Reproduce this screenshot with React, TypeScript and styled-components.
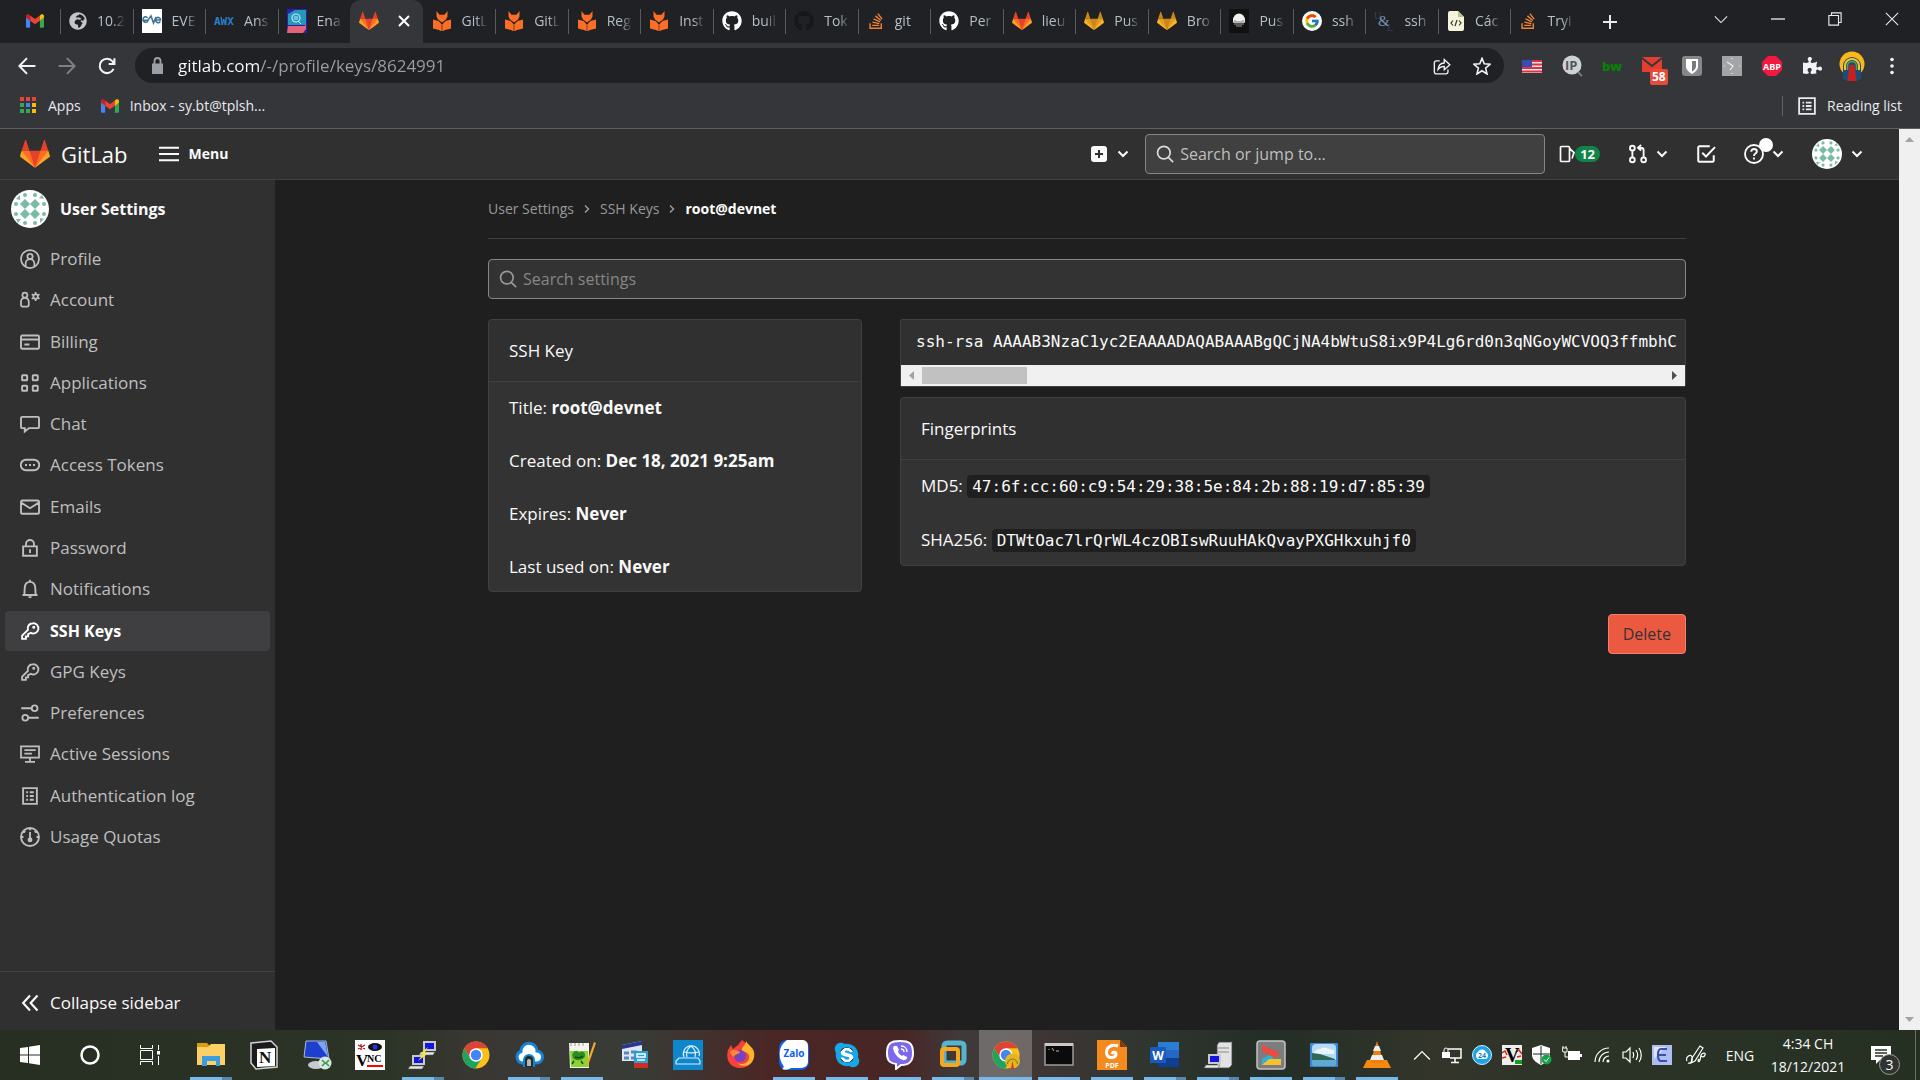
import React from "react";
import styled, { createGlobalStyle, css } from "styled-components";
import { FaGithub, FaStackOverflow, FaGlobeAfrica, FaSkype, FaPuzzlePiece } from "react-icons/fa";
import { FcGoogle } from "react-icons/fc";

/* ---------- base ---------- */

const GlobalStyle = createGlobalStyle`
  *, *::before, *::after { box-sizing: border-box; }
  body { margin: 0; background: #1f1f1f; }
  body, button, input { font-family: "Open Sans", "Noto Sans", sans-serif; }
  button { border: 0; padding: 0; background: none; color: inherit; cursor: pointer; }
  a { color: inherit; text-decoration: none; }
  svg { display: block; flex: none; }
  h1, h2, p, ul, ol, dl, dd, pre { margin: 0; padding: 0; }
  ul, ol { list-style: none; }
`;

const Screen = styled.div`
  display: flex;
  flex-direction: column;
  min-height: 100vh;
  color: #fafafa;
`;

/* ---------- browser frame ---------- */

const BrowserFrame = styled.header`
  background: #35363a;
  border-bottom: 1px solid #5f6063;
  color: #e8eaed;
`;

const TabStrip = styled.div`
  display: flex;
  height: 43px;
  background: #202124;
`;

const PinnedTab = styled.button`
  display: flex;
  align-items: center;
  justify-content: center;
  width: 60px;
  padding: 0 0 2px 10px;
`;

const Tabs = styled.div`
  display: grid;
  grid-template-columns: repeat(21, minmax(0, 1fr));
  flex: 0 1 1523px;
`;

const TabButton = styled.button<{ $active?: boolean; $line?: boolean }>`
  position: relative;
  display: flex;
  align-items: center;
  gap: 10px;
  padding: 0 6px 2px 9px;
  font-size: 14px;
  line-height: 20px;
  color: #b6bfc7;
  text-align: left;

  ${(p) =>
    p.$line &&
    css`
      &::before {
        content: "";
        position: absolute;
        left: 0;
        top: 9px;
        width: 1px;
        height: 25px;
        background: #5a5c60;
      }
    `}

  ${(p) =>
    p.$active &&
    css`
      background: #35363a;
      border-radius: 10px 10px 0 0;
      justify-content: space-between;
      padding: 0 13px 2px 9px;
      color: #fff;
    `}
`;

const TabLabel = styled.span`
  flex: 1;
  min-width: 0;
  overflow: hidden;
  white-space: nowrap;
  mask-image: linear-gradient(90deg, #000 50%, transparent 95%);
`;

const WindowControls = styled.div`
  display: flex;
  margin-left: auto;
  height: 38px;
`;

const WindowButton = styled.button`
  display: flex;
  align-items: center;
  justify-content: center;
  width: 57px;
`;

const NewTab = styled.button`
  display: flex;
  align-items: center;
  justify-content: center;
  width: 54px;
  height: 43px;
`;

const Toolbar = styled.div`
  display: flex;
  align-items: center;
  height: 45px;
  padding: 0 8px 0 7px;
`;

const ToolButton = styled.button<{ $dim?: boolean }>`
  display: flex;
  align-items: center;
  justify-content: center;
  width: 40px;
  height: 36px;
  color: ${(p) => (p.$dim ? "#7d7f83" : "#f1f3f4")};
`;

const Omnibox = styled.label`
  display: flex;
  align-items: center;
  flex: 1;
  height: 35px;
  margin: 0 8px;
  padding: 0 2px 0 16px;
  border-radius: 18px;
  background: #202124;
  color: #9aa0a6;
`;

const AddressInput = styled.input`
  flex: 1;
  min-width: 0;
  margin-left: 14px;
  padding: 0;
  border: 0;
  outline: 0;
  font-size: 17px;
  line-height: 24px;
  background: linear-gradient(90deg, #fff 83px, #9aa0a6 83px);
  background-clip: text;
  -webkit-text-fill-color: transparent;
`;

const BookmarkBar = styled.nav`
  display: flex;
  align-items: center;
  height: 40px;
  padding: 0 18px 5px 20px;
  gap: 20px;
  font-size: 14px;
  line-height: 20px;
`;

const Bookmark = styled.a<{ $end?: boolean }>`
  display: flex;
  align-items: center;
  gap: 11px;
  ${(p) =>
    p.$end &&
    css`
      margin-left: auto;
      padding-left: 15px;
      border-left: 1px solid #5f6063;
    `}
`;

const MailBadge = styled.span`
  position: absolute;
  left: 18px;
  top: 23px;
  padding: 0 2px;
  border-radius: 2px;
  background: #e84a3a;
  color: #fff;
  font-size: 12px;
  font-weight: 700;
  line-height: 16px;
`;

const BadgeAnchor = styled.span`
  position: relative;
  display: flex;
  align-items: center;
  justify-content: center;
  width: 40px;
  height: 40px;
`;

/* ---------- GitLab page ---------- */

const Viewport = styled.div`
  display: flex;
  flex: 1;
`;

const Page = styled.div`
  display: flex;
  flex-direction: column;
  flex: 1;
  min-width: 0;
  background: #1f1f1f;
`;

const ScrollColumn = styled.div`
  display: flex;
  flex-direction: column;
  align-items: center;
  justify-content: space-between;
  width: 21px;
  padding: 8px 0;
  background: #f0f0f0;
`;

const NavBar = styled.nav`
  display: flex;
  align-items: center;
  height: 51px;
  padding: 0 36px 0 20px;
  background: #303030;
  border-bottom: 1px solid #404040;
`;

const Brand = styled.a`
  display: flex;
  align-items: center;
  gap: 11px;
  font-size: 22px;
  line-height: 28px;
`;

const MenuButton = styled.button`
  display: flex;
  align-items: center;
  gap: 10px;
  margin-left: 31px;
  font-size: 14px;
  font-weight: 700;
  line-height: 24px;
`;

const NavActions = styled.div`
  display: flex;
  align-items: center;
  flex: 1;
  justify-content: flex-end;
`;

const IconButton = styled.button<{ $gap?: number }>`
  position: relative;
  display: flex;
  align-items: center;
  gap: ${(p) => p.$gap ?? 8}px;
`;

const ActionCluster = styled.div`
  display: flex;
  align-items: center;
  gap: 28px;
  margin-left: 14px;
`;

const SearchField = styled.label<{ $header?: boolean }>`
  display: flex;
  align-items: center;
  gap: 6px;
  height: 40px;
  padding: 0 10px;
  border: 1px solid #868686;
  border-radius: 4px;
  background: ${(p) => (p.$header ? "#404040" : "#333")};
  color: ${(p) => (p.$header ? "#dbdbdb" : "#999")};
  ${(p) =>
    p.$header &&
    css`
      flex: 0 1 400px;
      margin-left: 16px;
    `}
`;

const SearchInput = styled.input`
  flex: 1;
  min-width: 0;
  padding: 0;
  border: 0;
  outline: 0;
  background: none;
  color: #fafafa;
  font-size: 16px;
  line-height: 25px;

  &::placeholder {
    opacity: 1;
  }
  &[data-tone="light"]::placeholder { color: #bfbfbf; }
  &[data-tone="dim"]::placeholder { color: #868686; }
`;

const CountBadge = styled.span`
  padding: 0 5px;
  border-radius: 8px;
  background: #108548;
  color: #fff;
  font-size: 13px;
  font-weight: 700;
  line-height: 16px;
`;

const Dot = styled.span`
  position: absolute;
  left: 15px;
  top: -6px;
  width: 14px;
  height: 14px;
  border-radius: 50%;
  background: #fff;
`;

const Body = styled.div`
  display: flex;
  flex: 1;
`;

const Sidebar = styled.aside`
  display: flex;
  flex-direction: column;
  width: 275px;
  background: #303030;
  font-size: 17px;
  line-height: 24px;
`;

const SidebarTitle = styled.a`
  display: flex;
  align-items: center;
  gap: 11px;
  padding: 10px 11px;
  font-size: 16px;
  font-weight: 700;
`;

const SidebarList = styled.ul`
  display: flex;
  flex-direction: column;
  justify-content: space-between;
  min-height: 618px;
  margin: 1px 5px 0;
`;

const SidebarLink = styled.a<{ $active?: boolean }>`
  display: flex;
  align-items: center;
  gap: 10px;
  height: 40px;
  padding: 0 15px;
  border-radius: 4px;
  color: ${(p) => (p.$active ? "#fff" : "#bfbfbf")};
  background: ${(p) => (p.$active ? "#3f3f41" : "transparent")};
  font-weight: ${(p) => (p.$active ? 700 : 400)};
  font-size: ${(p) => (p.$active ? 16 : 17)}px;
`;

const CollapseButton = styled.button`
  display: flex;
  align-items: center;
  gap: 10px;
  height: 59px;
  margin-top: auto;
  padding: 4px 20px 0;
  border-top: 1px solid #404040;
  font-size: 17px;
  line-height: 24px;
`;

const Main = styled.main`
  flex: 1;
  min-width: 0;
  padding: 0 40px;
  font-size: 17px;
  line-height: 25px;
`;

const Content = styled.div`
  max-width: 1198px;
  margin: 0 auto;
`;

const Breadcrumbs = styled.ol`
  display: flex;
  align-items: center;
  gap: 8px;
  height: 59px;
  margin-bottom: 20px;
  border-bottom: 1px solid #404040;
  font-size: 14px;
  line-height: 20px;
  color: #999;
`;

const Crumb = styled.li<{ $current?: boolean }>`
  display: flex;
  align-items: center;
  gap: 8px;
  ${(p) => p.$current && "color: #fff; font-weight: 700;"}
`;

const Columns = styled.div`
  display: grid;
  grid-template-columns: minmax(0, 374fr) minmax(0, 786fr);
  column-gap: 38px;
  align-items: start;
  margin-top: 20px;
`;

const Card = styled.section`
  border: 1px solid #404040;
  border-radius: 4px;
  background: #333;
`;

const CardTitle = styled.h2`
  padding: 18px 20px;
  border-bottom: 1px solid #404040;
  border-radius: 4px 4px 0 0;
  background: #303030;
  font-size: 17px;
  font-weight: 400;
  line-height: 25px;
`;

const CardList = styled.ul`
  display: grid;
  gap: 28px;
  padding: 13px 20px 12px;
  font-size: 17px;
  line-height: 25px;
`;

const Code = styled.code`
  padding: 2px 5px;
  border-radius: 4px;
  background: #1f1f1f;
  font-family: "DejaVu Sans Mono", monospace;
  font-size: 16px;
`;

const KeyBox = styled.div`
  margin-bottom: 10px;
  border: 1px solid #404040;
  border-radius: 2px;
  background: #303030;
`;

const KeyText = styled.pre`
  overflow: hidden;
  padding: 9px 0 11px 15px;
  font-family: "DejaVu Sans Mono", monospace;
  font-size: 16px;
  line-height: 25px;
`;

const ScrollRow = styled.div`
  display: flex;
  align-items: center;
  justify-content: space-between;
  height: 21px;
  padding: 0 8px;
  background: #f0f0f0;
`;

const ScrollThumb = styled.span`
  width: 105px;
  height: 17px;
  margin: 0 auto 0 8px;
  background: #c1c1c1;
`;

const Arrow = styled.span<{ $dir: "up" | "down" | "left" | "right"; $dark?: boolean }>`
  width: ${(p) => (p.$dir === "up" || p.$dir === "down" ? 9 : 5)}px;
  height: ${(p) => (p.$dir === "up" || p.$dir === "down" ? 5 : 9)}px;
  background: ${(p) => (p.$dark ? "#505050" : "#a3a3a3")};
  clip-path: ${(p) =>
    ({
      up: "polygon(50% 0, 100% 100%, 0 100%)",
      down: "polygon(0 0, 100% 0, 50% 100%)",
      left: "polygon(100% 0, 100% 100%, 0 50%)",
      right: "polygon(0 0, 100% 50%, 0 100%)",
    })[p.$dir]};
`;

const Actions = styled.div`
  display: flex;
  justify-content: flex-end;
  margin-top: 48px;
`;

const DeleteButton = styled.button`
  height: 40px;
  padding: 0 14px;
  border: 1px solid #f57f6c;
  border-radius: 4px;
  background: #ec5941;
  color: #333;
  font-size: 16px;
  line-height: 24px;
`;

/* ---------- Windows taskbar ---------- */

const Taskbar = styled.footer`
  display: flex;
  height: 50px;
  background: linear-gradient(
    90deg,
    #262f22 0%,
    #2b3426 20%,
    #3a3733 25%,
    #383c37 33%,
    #4a2725 40%,
    #482625 47%,
    #3f3a39 50%,
    #3d3533 55%,
    #313630 59%,
    #232e26 66%,
    #33352a 75%,
    #2a3326 85%,
    #253023 100%
  );
`;

const SystemButton = styled.button`
  display: flex;
  align-items: center;
  justify-content: center;
  width: 60px;
`;

const AppGroup = styled.div`
  display: flex;
  margin-left: 4px;
`;

type Running = "none" | "one" | "many" | "active";

const AppButton = styled.button<{ $run: Running }>`
  display: flex;
  align-items: center;
  justify-content: center;
  width: 53px;
  background-color: ${(p) => (p.$run === "active" ? "rgba(255,255,255,0.25)" : "transparent")};
  background-repeat: no-repeat;
  background-position: center bottom;
  background-size: ${(p) => (p.$run === "active" ? 53 : 42)}px 3px;
  background-image: ${(p) =>
    ({
      none: "none",
      one: "linear-gradient(#76b9ed, #76b9ed)",
      active: "linear-gradient(#76b9ed, #76b9ed)",
      many: "linear-gradient(90deg, #76b9ed 32px, #5787ad 32px)",
    })[p.$run]};
`;

const Tray = styled.div`
  display: flex;
  align-items: stretch;
  margin-left: auto;
`;

const TrayButton = styled.button`
  display: flex;
  align-items: center;
  justify-content: center;
  width: 30px;
`;

const PenButton = styled(TrayButton)`
  width: 38px;
`;

const Language = styled.button`
  width: 50px;
  font-size: 14px;
`;

const Clock = styled.button`
  width: 86px;
  font-size: 14px;
  line-height: 23px;
  text-align: center;
`;

const Notifications = styled.button`
  position: relative;
  display: flex;
  align-items: center;
  justify-content: center;
  width: 65px;
  margin-right: 4px;
  padding-right: 5px;
  border-right: 1px solid #6b7068;
`;

const NoticeCount = styled.span`
  position: absolute;
  left: 28px;
  top: 24px;
  width: 21px;
  height: 21px;
  border: 1px solid #9a9d98;
  border-radius: 50%;
  background: #2f3430;
  font-size: 14px;
  line-height: 19px;
`;

/* ---------- drawings ---------- */

const Tanuki = ({ size = 20, gold = false }: { size?: number; gold?: boolean }) => {
  const [a, b, c] = gold ? ["#c9861a", "#e39d1f", "#fcb424"] : ["#e24329", "#fc6d26", "#fca326"];
  return (
    <svg width={size} height={size} viewBox="0 0 36 36" aria-hidden="true">
      <path fill={a} d="M2 14l9.38 9v-9l-4-12.28c-.205-.632-1.176-.632-1.38 0zM34 14l-9.38 9v-9l4-12.28c.205-.632 1.176-.632 1.38 0zM18 34.38L3 14h30z" />
      <path fill={b} d="M18 34.38L11.38 14H2l4 11zM18 34.38L24.62 14H34l-4 11z" />
      <path fill={c} d="M2 14L.1 20.16c-.18.565 0 1.2.5 1.56l17.42 12.66zM34 14l1.9 6.16c.18.565 0 1.2-.5 1.56L18 34.38z" />
    </svg>
  );
};

const Gmail = ({ size = 18 }: { size?: number }) => (
  <svg width={size} height={size} viewBox="0 0 24 24" aria-hidden="true">
    <path fill="#4285f4" d="M0 6v13.5C0 20.4.7 21 1.6 21H5.5V10z" />
    <path fill="#34a853" d="M24 6v13.5c0 .9-.7 1.5-1.6 1.5H18.500V10z" />
    <path fill="#ea4335" d="M5.500 4.500L12 9.400l6.500-4.900V11.500L12 16.400 5.500 11.500z" />
    <path fill="#c5221f" d="M0 5.500C0 3 2.700 2.400 4.200 3.500l1.300 1v7L0 7.400z" />
    <path fill="#fbbc04" d="M24 5.500c0-2.500-2.700-3.100-4.200-2l-1.300 1v7L24 7.400z" />
  </svg>
);

const BookFox = () => (
  <svg width="20" height="22" viewBox="0 0 20 22" aria-hidden="true">
    <path fill="#fc6d26" d="M1 9.500l5.500 1.500 2.500 2.500V21l-2-1-6-1.500zM19 9.500L13.500 11 11 13.500V21l2-1 6-1.500zM9.300 14h1.400v7H9.300zM4.500 1l3 3.800h5l3-3.800v5.500L14 9.500 10 12.500 6 9.500 4.500 6.500z" />
  </svg>
);

const EveIcon = () => (
  <svg width="20" height="24" viewBox="0 0 20 24" aria-hidden="true">
    <path fill="#fff" d="M0 0h20v24H0z" />
    <path d="M5.500 9c-1-2-4.500-1.500-4.500 1.500S5 14 6 12M1.500 11.300H6L9 7l2.500 7L14 8M14 11h4.500c0-3-4-3.500-4.700-1-.8 4 3.200 4.500 4.500 2.500" fill="none" stroke="#3f7394" strokeWidth="1.600" />
  </svg>
);

const AwxIcon = () => (
  <svg width="20" height="20" viewBox="0 0 20 20" aria-hidden="true">
    <text x="0" y="14" fontSize="11" fontWeight="700" fill="#2a7fc9" fontFamily="DejaVu Sans Mono">AWX</text>
  </svg>
);

const CubeIcon = () => (
  <svg width="20" height="24" viewBox="0 0 20 24" aria-hidden="true">
    <path fill="#2b1fb0" d="M0 0h20v24H0z" />
    <path fill="#2497bd" d="M1 5l7-4h11v15H1z" />
    <path fill="#e3637a" d="M1 17h17l1-2v5l-3 4H0z" />
    <circle cx="9" cy="9" r="4" fill="none" stroke="#bfe7f5" strokeWidth="1.200" />
    <path d="M8 7v4M10 7v4M11 12l3 3" stroke="#bfe7f5" />
  </svg>
);

const OctopusIcon = () => (
  <svg width="20" height="24" viewBox="0 0 20 24" aria-hidden="true">
    <path fill="#111" d="M0 0h20v24H0z" />
    <path fill="#f0f0f0" d="M4 11a6 6.500 0 0112 0c0 2 0 3-1 3H5c-1 0-1-1-1-3z" />
    <path d="M6 11v5M8 12v6M10 12v6M12 12v6M14 11v5" stroke="#888" strokeWidth="1.200" />
  </svg>
);

const UnixIcon = () => (
  <svg width="20" height="22" viewBox="0 0 20 22" aria-hidden="true">
    <g fontFamily="Liberation Serif" fill="#31415f">
      <text x="0" y="9" fontSize="10">U</text>
      <text x="4" y="16" fontSize="15" fill="#7d93bd">&amp;</text>
      <text x="13" y="21" fontSize="10">L</text>
    </g>
  </svg>
);

const CodeDocIcon = () => (
  <svg width="18" height="22" viewBox="0 0 18 22" aria-hidden="true">
    <path fill="#f6f5dc" d="M3 1h8l6 6v12a2 2 0 01-2 2H3a2 2 0 01-2-2V3a2 2 0 012-2z" />
    <path fill="#b9c39b" d="M11 1l6 6h-6z" />
    <path d="M6 10.500L4 13l2 2.500M12 10.500l2 2.500-2 2.500M10 10l-2 6" fill="none" stroke="#333" strokeWidth="1.200" />
  </svg>
);

const GlobeIcon = () => <FaGlobeAfrica size={18} color="#c4c7c9" />;

type StrokeProps = { d: string; size?: number; w?: number; vb?: number; children?: React.ReactNode };
const Stroke = ({ d, size = 20, w = 1.5, vb = 16, children }: StrokeProps) => (
  <svg width={size} height={size} viewBox={`0 0 ${vb} ${vb}`} fill="none" stroke="currentColor" strokeWidth={w} aria-hidden="true">
    <path d={d} />
    {children}
  </svg>
);

const Chevron = () => <Stroke size={12} vb={12} w={2} d="M1.500 3.500L6 8l4.500-4.500" />;
const Magnifier = ({ size = 18 }: { size?: number }) => <Stroke size={size} d="M7 1.200a5.600 5.600 0 100 11.200A5.600 5.600 0 007 1.200zM11 11l4.200 4.200" />;

const IdenticonArt = ({ size }: { size: number }) => {
  const teal = "#79bba4";
  const small = [5, 14, 24, 33];
  return (
    <svg width={size} height={size} viewBox="0 0 38 38" aria-hidden="true">
      <circle cx="19" cy="19" r="19" fill="#fff" />
      {[14, 24].map((x) => [14, 24].map((y) => <path key={`${x}-${y}`} fill={teal} d={`M${x} ${y - 5}l5 5-5 5-5-5z`} />))}
      {small.map((x) => small.map((y) =>
        (x === 5 || x === 33) !== (y === 5 || y === 33) ? <circle key={`${x}.${y}`} cx={x} cy={y} r="2" fill={teal} /> : null
      ))}
      <path fill={teal} d="M5 9l4-4v5zM33 9l-5-1 3-3zM5 29l5 0-3 4zM33 29l-4 4v-5z" />
    </svg>
  );
};

const sideIcons: Record<string, React.ReactNode> = {
  Profile: <Stroke d="M8 .8a7.200 7.200 0 100 14.400A7.200 7.200 0 008 .8zM8 3.800a2.100 2.100 0 100 4.200 2.100 2.100 0 000-4.200zM4.500 14v-2.500a3.500 3.500 0 017 0V14" w={1.4} />,
  Account: <Stroke d="M3.900 2.100a2 2 0 100 4 2 2 0 000-4zM.8 12V9.300a3.100 3.100 0 016.200 0V12a1.200 1.200 0 01-1.200 1.200H2A1.200 1.200 0 01.8 12z" w={1.4}><circle cx="12.500" cy="5.200" r="1.800" /><path d="M12.500 1.600v1.600M12.500 7.200v1.600M9.400 3.400l1.400.8M14.200 6.200l1.400.8M9.400 7l1.400-.8M14.200 4.200l1.400-.8" /></Stroke>,
  Billing: <Stroke d="M1.800 2.800h12.400a1 1 0 011 1v8.600a1 1 0 01-1 1H1.800a1 1 0 01-1-1V3.800a1 1 0 011-1zM.8 6h14.400M3.500 10h4" />,
  Applications: <Stroke d="M2.200 1.800h3a.5.5 0 01.5.5v3a.5.5 0 01-.5.5h-3a.5.5 0 01-.5-.5v-3a.5.500 0 01.5-.5zM10.700 1.800h3a.5.5 0 01.5.5v3a.5.5 0 01-.5.5h-3a.5.5 0 01-.5-.5v-3a.5.5 0 01.5-.5zM2.200 10.200h3a.5.5 0 01.5.5v3a.5.5 0 01-.5.5h-3a.5.5 0 01-.5-.5v-3a.5.5 0 01.5-.5zM10.700 10.200h3a.5.5 0 01.5.5v3a.5.5 0 01-.5.5h-3a.5.5 0 01-.5-.5v-3a.5.5 0 01.5-.5z" />,
  Chat: <Stroke d="M1.800 2.300h12.400a1 1 0 011 1v7a1 1 0 01-1 1H7.200L3.800 14v-2.700h-2a1 1 0 01-1-1v-7a1 1 0 011-1z" />,
  "Access Tokens": <Stroke d="M4.800 3.800h6.400a4 4 0 010 8.400H4.800a4 4 0 010-8.400zM4 8h1.600M7.200 8h1.600M10.400 8H12" />,
  Emails: <Stroke d="M1.800 2.800h12.400a1 1 0 011 1v8.600a1 1 0 01-1 1H1.800a1 1 0 01-1-1V3.800a1 1 0 011-1zM1 4.500l7 4.500 7-4.500" />,
  Password: <Stroke d="M2.500 6.700h11v7.500h-11zM4.800 6.500V4.800a3.200 3.200 0 016.400 0v1.700M8 9v3" />,
  Notifications: <Stroke d="M2 12.800h12M3.500 12.500l.3-5.500C4 4 5.500 2.300 8 2.300S12 4 12.200 7l.3 5.500M8 .5v1.800M6.800 14.500h2.400" />,
  key: <Stroke d="M10.200 1.800a4.100 4.100 0 00-3.900 5.300L1.700 11.700v2.600h3v-2h1.800v-1.800l2.200-1a4.100 4.100 0 101.500-7.700z"><circle cx="11" cy="5" r=".5" /></Stroke>,
  Preferences: <Stroke d="M1 4.200h8.200M6.800 11.800H15"><circle cx="11.700" cy="4.200" r="2.300" /><circle cx="4.200" cy="11.800" r="2.300" /></Stroke>,
  "Active Sessions": <Stroke d="M.8 1.800h14.400v9H.8zM8 11v3M4 14.300h8M3.500 4.800h9M3.500 7.600h6" w={1.4} />,
  "Authentication log": <Stroke d="M2.500 1.700h11v12.600h-11zM5 5h1.400M5 8h1.400M5 11h1.400M7.800 5H11M7.800 8H11M7.800 11H11" />,
  "Usage Quotas": <Stroke d="M8 .8a7.200 7.200 0 100 14.400A7.200 7.200 0 008 .8zM8 4v6M8 1v1.500M1 8h1.800M13.200 8H15M3.200 3.200l1 1M12.800 3.200l-1 1"><circle cx="8" cy="10.300" r="1.200" fill="currentColor" /></Stroke>,
};

const ChromeLogo = ({ size = 28, profile = false }: { size?: number; profile?: boolean }) => (
  <svg width={size} height={size} viewBox="0 0 28 28" aria-hidden="true">
    <circle cx="14" cy="14" r="13.500" fill="#fbc116" />
    <path fill="#db4437" d="M2.300 7.300A13.500 13.500 0 0125.700 7.300H14L8.200 17.300z" />
    <path fill="#1ea362" d="M2.300 7.300A13.500 13.500 0 0013.200 27.500L19.800 17.300 14 20.500 8.200 17.300z" />
    <circle cx="14" cy="14" r="6.700" fill="#fff" />
    <circle cx="14" cy="14" r="5.200" fill="#4285f4" />
    {profile && (
      <g>
        <circle cx="20.500" cy="20" r="7.500" fill="#e8b420" />
        <path fill="none" stroke="#647c21" d="M15.500 23a5 5 0 0110 0" />
        <path fill="#d9332b" d="M19 28l1.500-8 1.500 8z" />
      </g>
    )}
  </svg>
);

const ProfileArt = () => (
  <svg width="26" height="30" viewBox="0 0 26 30" aria-hidden="true">
    <circle cx="13" cy="13" r="12.500" fill="#fbb81b" />
    <path fill="#1a4c7c" d="M4 28V15a9 9 0 0118 0v13l-5 2H9z" />
    <path d="M6 19v-4a7 7 0 0114 0v4" fill="none" stroke="#f4c531" strokeWidth="2" />
    <path d="M8.500 19v-4a4.500 4.500 0 019 0v4" fill="none" stroke="#57a639" strokeWidth="1.500" />
    <path fill="#c9201f" d="M10.500 14h5l2 16h-9z" />
  </svg>
);

/* small picture helper for the coloured application icons */
const Pic = ({ w = 30, h = 30, children }: { w?: number; h?: number; children: React.ReactNode }) => (
  <svg width={w} height={h} viewBox={`0 0 ${w} ${h}`} aria-hidden="true">{children}</svg>
);

const extensions: { name: string; art: React.ReactNode; badge?: string }[] = [
  { name: "Translate", art: <Pic w={20} h={16}><path fill="#f3e9ea" d="M0 2h20v13H0z" /><path d="M0 3h20M0 6.500h20M0 10h20M0 13.500h20" stroke="#df2f43" strokeWidth="2" /><path fill="#3c4bb0" d="M0 2h10v7H0z" /></Pic> },
  { name: "IP address", art: <Pic w={22} h={22}><circle cx="11" cy="10" r="9.500" fill="#cfd2d4" /><path d="M17 17l4 4" stroke="#777" strokeWidth="2" /><text x="4" y="15" fontSize="13" fontWeight="700" fontFamily="Open Sans" fill="#55585b">IP</text></Pic> },
  { name: "bw", art: <Pic w={22} h={20}><text x="1" y="15" fontSize="13" fontWeight="800" fontFamily="Open Sans" fill="#088008">bw</text></Pic> },
  { name: "Mail", badge: "58", art: <Pic w={22} h={22}><path fill="#e33e2f" d="M1 2h20v15H1z" /><path d="M1 3l10 8 10-8" fill="none" stroke="#35363a" strokeWidth="2" /></Pic> },
  { name: "Password vault", art: <Pic w={22} h={22}><rect x="1" y="1" width="20" height="20" rx="3" fill="#858789" /><path fill="#fff" d="M5 4h12v7c0 4-3 6-6 8-3-2-6-4-6-8z" /><path fill="#77797b" d="M11 6h4v5c0 3-2 4-4 5.500z" /></Pic> },
  { name: "Clock", art: <Pic w={20} h={22}><path fill="#a3a4a6" d="M0 1h20v20H0z" /><path d="M5 7l6 4-3 4M10 3v1M10 18v1M2 11h1M17 11h1" fill="none" stroke="#eee" strokeWidth="1.200" /></Pic> },
  { name: "Ad blocker", art: <Pic w={22} h={22}><path fill="#f2183f" d="M7 1h8l6 6v8l-6 6H7l-6-6V7z" /><text x="11" y="14.500" textAnchor="middle" fontSize="9" fontWeight="700" fontFamily="Open Sans" fill="#fff">ABP</text></Pic> },
  { name: "Extensions", art: <FaPuzzlePiece size={19} color="#f1f3f4" /> },
  { name: "Browser profile", art: <ProfileArt /> },
];

const tabs: { icon: React.ReactNode; text?: string }[] = [
  { icon: <GlobeIcon />, text: "10.2" },
  { icon: <EveIcon />, text: "EVE" },
  { icon: <AwxIcon />, text: "Ans" },
  { icon: <CubeIcon />, text: "Ena" },
  { icon: <Tanuki /> },
  { icon: <BookFox />, text: "GitL" },
  { icon: <BookFox />, text: "GitL" },
  { icon: <BookFox />, text: "Reg" },
  { icon: <BookFox />, text: "Inst" },
  { icon: <FaGithub size={20} color="#fff" />, text: "buil" },
  { icon: <FaGithub size={20} color="#15171a" />, text: "Tok" },
  { icon: <FaStackOverflow size={18} color="#ef8236" />, text: "git" },
  { icon: <FaGithub size={20} color="#fff" />, text: "Per" },
  { icon: <Tanuki />, text: "lieu" },
  { icon: <Tanuki gold />, text: "Pus" },
  { icon: <Tanuki gold />, text: "Bro" },
  { icon: <OctopusIcon />, text: "Pus" },
  { icon: <Pic w={20} h={22}><circle cx="10" cy="11" r="10" fill="#fff" /><g transform="translate(2 3)"><FcGoogle size={16} /></g></Pic>, text: "ssh" },
  { icon: <UnixIcon />, text: "ssh" },
  { icon: <CodeDocIcon />, text: "Các" },
  { icon: <FaStackOverflow size={18} color="#ef8236" />, text: "Tryi" },
];

const Monitor = ({ x, y }: { x: number; y: number }) => (
  <g transform={`translate(${x} ${y})`}>
    <path fill="#c9c9c9" d="M2 0h13v10H2z" />
    <path fill="#1414e0" d="M4 2h9v6H4z" />
    <path fill="#e8e8e8" stroke="#555" strokeWidth=".6" d="M0 11h14l-2 3H-2z" />
  </g>
);

const apps: { name: string; run: Running; art: React.ReactNode }[] = [
  { name: "File Explorer", run: "many", art: <Pic><path fill="#e09a12" d="M1 3h10l3 3h1v6H1z" /><path fill="#fcd064" d="M1 7h11l3-3h14v21H1z" /><path fill="#3d9be0" d="M6 16h18v10h-4v-5h-9v5H6z" /></Pic> },
  { name: "Notion", run: "none", art: <Pic><path fill="#1b1b1b" stroke="#d4d4d4" strokeWidth="1.500" d="M2 3l20-2 6 6v20l-21 2-5-6z" /><path fill="#fff" d="M8 9l18-1v18L8 27z" /><text x="10" y="23" fontSize="17" fontWeight="700" fontFamily="Liberation Serif" fill="#111">N</text></Pic> },
  { name: "Remote Desktop", run: "none", art: <Pic><path fill="#1d3fd0" stroke="#aebbd0" d="M4 1h20l3 18-25-2z" /><path fill="#7ca6f5" d="M15 2h8l3 15z" /><ellipse cx="14" cy="25" rx="8" ry="4" fill="#c5cbd3" /><circle cx="23" cy="23" r="6.500" fill="#dfe3e3" /><path d="M20 20l3 3-3 3M27 20l-3 3 3 3" fill="none" stroke="#27a34a" strokeWidth="1.500" /></Pic> },
  { name: "VNC", run: "none", art: <Pic><path fill="#fff" d="M0 0h30v30H0z" /><ellipse cx="20" cy="7" rx="7" ry="4" fill="#111" /><circle cx="20" cy="7" r="2.500" fill="#2236d8" /><path d="M3 5l7 4M3 9l7-4M6 4v6" stroke="#b01616" strokeWidth="1.300" /><text x="1" y="26" fontSize="17" fontWeight="700" fontFamily="Liberation Serif">V</text><text x="12" y="22" fontSize="10" fontWeight="700" fontFamily="Liberation Serif">NC</text><path fill="#f00" d="M12 25h16v2H12z" /></Pic> },
  { name: "PuTTY", run: "many", art: <Pic><Monitor x={13} y={1} /><Monitor x={2} y={15} /><path fill="#f7ef1b" d="M20 7l-7 6 2 1-5 7 8-6-2-1z" /></Pic> },
  { name: "Chrome", run: "none", art: <ChromeLogo /> },
  { name: "Cloud tunnel", run: "many", art: <Pic><path fill="#fff" stroke="#1583d8" strokeWidth="3" d="M8 23a6 6 0 01-1-11.500A8 8 0 0123 11a6 6 0 01-1 12z" /><path fill="#262d25" d="M10 27v-7a5 5 0 0110 0v7z" /><path fill="#1583d8" d="M9 27v-7a6 6 0 0112 0v7h-2v-7a4 4 0 00-8 0v7z" /><path fill="#b7b7b7" d="M13 26v-5a2 2 0 014 0v5z" /></Pic> },
  { name: "Notepad++", run: "one", art: <Pic><path fill="#f5f5ef" d="M2 3h20v25H3z" /><path fill="#8bd432" d="M3 11h18l1 16H4z" /><path fill="#2f8a24" d="M6 13c2-3 5-3 6 0 3-3 6-1 6 2 1 5-10 7-12 3-1-2-1-4 0-5z" /><path d="M8 17c3 1 6 1 8-1M7 21l-2 3M14 21l2 3" fill="none" stroke="#164d12" strokeWidth="1.500" /><path d="M4 3v3M8 3v3M12 3v3M16 3v3" stroke="#999" /><path fill="#f0a92a" d="M27 2l2 1-7 20-3 3 1-4z" /></Pic> },
  { name: "Network scanner", run: "none", art: <Pic><path fill="#dce7f3" d="M2 5l20-4v20H2z" /><path fill="#26378e" d="M2 5l20-4v4L2 9z" /><path d="M4 13h5M11 12h6M4 18h5M11 18h4" stroke="#5d84bd" strokeWidth="3" /><path fill="#2a9fd3" d="M14 11h14v12H14z" /><path d="M17 14h8v3h-8zM17 20h8" fill="none" stroke="#fff" strokeWidth="1.500" /><path fill="#d22b22" d="M14 23h14v5H14z" /></Pic> },
  { name: "Web disk", run: "none", art: <Pic><path fill="#0e86cc" d="M0 0h30v30H0z" /><path d="M6 18h19l2 3v3H3v-3zM11 17a8 8 0 1115-1M18 6c-4 3-5 7-4 11M18 6c4 3 5 7 4 11M11 12c4 1 10 1 15 0" fill="none" stroke="#d8efff" strokeWidth="1.200" /></Pic> },
  { name: "Firefox", run: "none", art: <Pic><path fill="#f4413b" d="M2 10l3-5 2 4 5-4 4-5 5 4 3 3c8 10 1 21-9 21S-1 21 2 10z" /><path fill="#ffb52b" d="M20 1c0 5-5 5-4 10 5 1 8 3 7 8-2 5-7 6-12 4 9 7 19 0 17-11-1-5-6-7-8-11z" /><circle cx="14" cy="16" r="6" fill="#7641c5" /><path fill="#ff8a2a" d="M4 11c4-2 7-1 10 1-1 3-5 1-6 5-2-1-4-4-4-6z" /></Pic> },
  { name: "Zalo", run: "one", art: <Pic><rect width="30" height="30" rx="8" fill="#0a61ef" /><path fill="#fff" d="M8 0h15c4 0 6 2 6 7v14c0 5-3 7-8 7h-9c-3 2-6 2-9 1 2-1 2-2 1-4-5-7-5-19 4-25z" /><text x="15" y="17" textAnchor="middle" fontSize="10" fontWeight="700" fontFamily="Open Sans" fill="#0a61ef">Zalo</text></Pic> },
  { name: "Skype", run: "one", art: <FaSkype size={28} color="#14a8e8" style={{ background: "radial-gradient(circle, #fff 35%, transparent 36%)" }} /> },
  { name: "Viber", run: "one", art: <Pic><path fill="#7c68ee" stroke="#fff" strokeWidth="2" d="M15 1c9 0 13 2 13 12 0 9-4 12-12 12l-5 4v-5C4 23 2 20 2 13 2 3 6 1 15 1z" /><path fill="#fff" d="M9 6c-3 2 2 12 9 14 2 1 5-2 4-3l-4-2-1 1c-2-1-4-3-4-5l1-1-2-4z" /><path d="M16 6c4 0 6 3 6 6M16 9c2 0 3 1 3 3" fill="none" stroke="#fff" strokeWidth="1.300" /></Pic> },
  { name: "VMware", run: "many", art: <Pic><rect x="6" y="3" width="20" height="20" rx="3" fill="none" stroke="#55b5cf" strokeWidth="5" /><rect x="4" y="9" width="16" height="16" rx="2" fill="none" stroke="#f6a81c" strokeWidth="4" /></Pic> },
  { name: "Chrome with profile", run: "active", art: <ChromeLogo profile /> },
  { name: "Command Prompt", run: "one", art: <Pic><path fill="#0b0b0b" stroke="#9c9c9c" strokeWidth="1.500" d="M1 4h28v21H1z" /><path fill="#c9c9c9" d="M1 3h28v3H1z" /><path d="M5 9v1M8 8l2 3M12 11h3" stroke="#bbb" /></Pic> },
  { name: "Foxit PDF", run: "one", art: <Pic><path fill="#f58a1f" d="M0 0h23l7 7v23H0z" /><path fill="#7b3f05" d="M23 0l7 7h-7z" /><path d="M21 6c-8-3-13 3-11 9 2 4 9 3 9-1 0-2-3-3-4 0" fill="none" stroke="#fff" strokeWidth="3" /><text x="15" y="28" textAnchor="middle" fontSize="7" fontWeight="700" fontFamily="Open Sans" fill="#fff">PDF</text></Pic> },
  { name: "Word", run: "many", art: <Pic><path fill="#2b7cd3" d="M8 2h21v8H8z" /><path fill="#2368c4" d="M8 10h21v8H8z" /><path fill="#103f91" d="M8 18h21v9H8z" /><path fill="#185abd" d="M0 7h16v16H0z" /><text x="8" y="19.500" textAnchor="middle" fontSize="12" fontWeight="700" fontFamily="Open Sans" fill="#fff">W</text></Pic> },
  { name: "Server manager", run: "many", art: <Pic><path fill="#e2e2e2" stroke="#444" strokeWidth=".8" d="M16 2h12l1-1v24l-3 3H14V5z" /><path d="M15 8h11M15 12h11" stroke="#888" /><Monitor x={3} y={14} /></Pic> },
  { name: "Remote client", run: "one", art: <Pic><rect x="1" y="1" width="28" height="28" rx="3" fill="#7d7d80" stroke="#c3c3c5" strokeWidth="1.500" /><path fill="#ef4a3e" d="M6 5l18 8-5 5L6 11z" /><path fill="#2cb3d8" d="M6 25V19l7-4 5 3z" /><path fill="#f6c12e" d="M13 19h12v6H6z" /></Pic> },
  { name: "Photos", run: "many", art: <Pic><rect x="1" y="3" width="28" height="24" rx="1" fill="#3c86d6" /><rect x="3" y="4" width="24" height="22" rx="4" fill="#b5daf3" /><path fill="#e9f5fb" d="M5 12c3-4 6-2 8-4 4-2 7 2 12 2v4H5z" /><path fill="#2f6a58" d="M3 13l8 1 15 5v2H3z" /><path fill="#5fa9d4" d="M3 20h24v3a3 3 0 01-3 3H6a3 3 0 01-3-3z" /></Pic> },
  { name: "VLC", run: "one", art: <Pic><path fill="#f58a12" d="M5 20h20l4 8H1z" /><path fill="#f07d0c" d="M15 1l7 22H8z" /><path fill="#efefef" d="M13 6h4l2 5h-8zM10 15h10l2 5H8z" /></Pic> },
];

const tray: { name: string; art: React.ReactNode }[] = [
  { name: "Show hidden icons", art: <Stroke size={18} w={1.2} d="M1 12l7-7 7 7" /> },
  { name: "Network", art: <Pic w={20} h={20}><path d="M6 4h13v9H8M13 13v4M9 17.500h8" fill="none" stroke="#fff" strokeWidth="1.500" /><path fill="#fff" d="M0 7h8v6H0z" /><path d="M2 7V5a2 2 0 014 0v2" fill="none" stroke="#fff" /></Pic> },
  { name: "Zalo cloud", art: <Pic w={20} h={20}><circle cx="10" cy="10" r="9.500" fill="#1ba4e8" stroke="#d5effb" /><path fill="#fff" d="M6 14a4 4 0 010-7 4.500 4.500 0 018 0 4 4 0 010 7z" /><text x="10" y="13" textAnchor="middle" fontSize="7" fontWeight="700" fontFamily="Open Sans" fill="#1483c7">24</text></Pic> },
  { name: "Unikey", art: <Pic w={20} h={20}><path fill="#eee" d="M0 0h20v20H0z" /><path d="M0 8l3-2 2 4M14 7l3-2 3 4M0 13l4-1M15 12l4-1" fill="none" stroke="#d22" strokeWidth="1.500" /><text x="3" y="17" fontSize="20" fontWeight="700" fontFamily="Liberation Serif">V</text><path fill="#18a01d" d="M13 15h7v4h-7z" /></Pic> },
  { name: "Security", art: <Pic w={20} h={20}><path fill="#fff" d="M9 0l9 3v7c0 5-5 8-9 10-4-2-9-5-9-10V3z" /><path d="M9 1v18M1 9h17" stroke="#222" /><circle cx="14.500" cy="14.500" r="5" fill="#17a34a" /><path d="M12 14.500l2 2 3-4" stroke="#fff" fill="none" /></Pic> },
  { name: "Battery", art: <Pic w={20} h={20}><path fill="#fff" d="M6 6h12v9H6zM18 9h2v3h-2z" /><path d="M0 3h5v4H1zM3 7v5h3M1 1v2M4 1v2" fill="none" stroke="#fff" /></Pic> },
  { name: "Wi-Fi", art: <Pic w={18} h={18}><path d="M2 16A14 14 0 0116 2M6 16A10 10 0 0116 6M10 16a6 6 0 016-6" fill="none" stroke="#fff" strokeWidth="1.200" /><circle cx="15" cy="15" r="1.500" fill="#fff" /></Pic> },
  { name: "Volume", art: <Pic w={20} h={20}><path d="M1 7h3l4-4v14l-4-4H1zM11 7c1 2 1 4 0 6M14 5c2 3 2 7 0 10M17 3c3 4 3 10 0 14" fill="none" stroke="#fff" strokeWidth="1.200" /></Pic> },
  { name: "EVKey", art: <Pic w={20} h={20}><path fill="#aebdf2" d="M0 0h20v20H0z" /><path fill="#dfe5fc" d="M2 2h12L2 14z" /><path d="M15 4H9c-4 0-4 12 0 12h6M6 10h8" fill="none" stroke="#3b50a8" strokeWidth="2.200" /></Pic> },
];

const navItems = [
  "Profile", "Account", "Billing", "Applications", "Chat", "Access Tokens", "Emails", "Password",
  "Notifications", "SSH Keys", "GPG Keys", "Preferences", "Active Sessions", "Authentication log", "Usage Quotas",
];

/* ---------- sections ---------- */

const Browser = () => (
  <BrowserFrame>
    <TabStrip>
      <PinnedTab aria-label="Gmail"><Gmail /></PinnedTab>
      <Tabs>
        {tabs.map((t, i) => (
          <TabButton key={i} $active={!t.text} $line={i !== 4 && i !== 5} aria-label={t.text ?? "GitLab"}>
            {t.icon}
            {t.text ? <TabLabel>{t.text}</TabLabel> : <Stroke size={12} vb={12} w={2} d="M1 1l10 10M11 1L1 11" />}
          </TabButton>
        ))}
      </Tabs>
      <NewTab aria-label="New tab"><Stroke size={16} w={2} d="M8 1v14M1 8h14" /></NewTab>
      <WindowControls>
        <WindowButton aria-label="Search tabs"><Stroke size={14} w={1.2} d="M1 5l7 7 7-7" /></WindowButton>
        <WindowButton aria-label="Minimize"><Stroke size={14} w={1.5} d="M0 8h16" /></WindowButton>
        <WindowButton aria-label="Restore"><Stroke size={14} w={1.3} d="M1 4h11v11H1zM4 4V1h11v11h-3" /></WindowButton>
        <WindowButton aria-label="Close"><Stroke size={14} w={1.3} d="M1 1l14 14M15 1L1 15" /></WindowButton>
      </WindowControls>
    </TabStrip>
    <Toolbar>
      <ToolButton aria-label="Back"><Stroke size={18} w={1.8} d="M15.500 8H1.500M8 1L1.200 8 8 15" /></ToolButton>
      <ToolButton $dim aria-label="Forward"><Stroke size={18} w={1.8} d="M.5 8h14M8 1l6.800 7L8 15" /></ToolButton>
      <ToolButton aria-label="Reload"><Stroke size={18} w={1.8} d="M13.800 10.500A6.400 6.400 0 1113 4l1.500 1.800M14.600 1v5.200H9.500" /></ToolButton>
      <Omnibox>
        <Pic w={13} h={18}><path fill="#9aa0a6" d="M1 6.500h11V17H1z" /><path d="M3.500 7V4a3 3 0 016 0v3" fill="none" stroke="#9aa0a6" strokeWidth="1.800" /></Pic>
        <AddressInput aria-label="Address" defaultValue="gitlab.com/-/profile/keys/8624991" />
        <ToolButton aria-label="Share"><Stroke size={18} w={1.2} d="M6 3.500H3A1.800 1.800 0 001.200 5.300v8A1.800 1.800 0 003 15h8.500a1.800 1.800 0 001.800-1.800V11M4.500 11c.3-4 2-5.500 5.500-5.700V2.200L15 6.800l-5 4.500V8.300C7 8.300 6 9 4.500 11z" /></ToolButton>
        <ToolButton aria-label="Bookmark this page"><Stroke size={18} w={1.4} d="M8 1.200l2 4.900 5.200.4-4 3.400 1.300 5.200L8 12.200l-4.500 2.900 1.300-5.200-4-3.400L6 6.100z" /></ToolButton>
      </Omnibox>
      {extensions.map((e) => (
        <ToolButton key={e.name} aria-label={e.name}>
          <BadgeAnchor>{e.art}{e.badge && <MailBadge>{e.badge}</MailBadge>}</BadgeAnchor>
        </ToolButton>
      ))}
      <ToolButton aria-label="Browser menu">
        <Pic w={6} h={20}><g fill="#f1f3f4"><circle cx="3" cy="3.500" r="1.800" /><circle cx="3" cy="10" r="1.800" /><circle cx="3" cy="16.500" r="1.800" /></g></Pic>
      </ToolButton>
    </Toolbar>
    <BookmarkBar aria-label="Bookmarks">
      <Bookmark href="#apps">
        <Pic w={17} h={17}>
          {["#ea4335", "#ea4335", "#ea4335", "#34a853", "#4285f4", "#fbbc04", "#34a853", "#34a853", "#fbbc04"].map((c, i) => (
            <rect key={i} x={(i % 3) * 6} y={Math.floor(i / 3) * 6} width="4" height="4" fill={c} />
          ))}
        </Pic>
        Apps
      </Bookmark>
      <Bookmark href="#inbox"><Gmail />Inbox - sy.bt@tplsh...</Bookmark>
      <Bookmark href="#reading" $end>
        <Stroke size={18} w={1.6} d="M1 1h14v14H1zM4 5h1.500M4 8h1.500M4 11h1.500M7 5h5M7 8h5M7 11h5" />
        Reading list
      </Bookmark>
    </BookmarkBar>
  </BrowserFrame>
);

const GitLabNav = () => (
  <NavBar>
    <Brand href="#home"><Tanuki size={30} />GitLab</Brand>
    <MenuButton><Stroke size={20} w={1.5} d="M0 3h16M0 8h16M0 13h16" />Menu</MenuButton>
    <NavActions>
      <IconButton aria-label="Create new" $gap={10}>
        <Pic w={16} h={16}><rect width="16" height="16" rx="3" fill="#fafafa" /><path d="M8 4v8M4 8h8" stroke="#303030" strokeWidth="2" /></Pic>
        <Chevron />
      </IconButton>
      <SearchField $header>
        <Magnifier />
        <SearchInput data-tone="light" aria-label="Search or jump to" placeholder="Search or jump to..." />
      </SearchField>
      <ActionCluster>
        <IconButton aria-label="Issues" $gap={0}>
          <Pic w={16} h={18}><path d="M2.500 1.500h7a1 1 0 011 1v13a1 1 0 01-1 1h-7a1 1 0 01-1-1v-13a1 1 0 011-1zM11 4l4 3.500-2 6" fill="none" stroke="#fafafa" strokeWidth="1.700" /></Pic>
          <CountBadge>12</CountBadge>
        </IconButton>
        <IconButton aria-label="Merge requests">
          <Stroke size={20} d="M3.500 5.500v5M12.500 10.500V5c0-1.500-1-2-2.500-2H8.500M10.500.8L8 3l2.500 2.200"><circle cx="3.500" cy="3.300" r="1.900" /><circle cx="3.500" cy="12.700" r="1.900" /><circle cx="12.500" cy="12.700" r="1.900" /></Stroke>
          <Chevron />
        </IconButton>
        <IconButton aria-label="To-Do List">
          <Stroke size={20} w={1.6} d="M11 1.800H2.800a1 1 0 00-1 1v10.400a1 1 0 001 1h10.400a1 1 0 001-1V9M5 7l3 3 7.200-7.500" />
        </IconButton>
        <IconButton aria-label="Help">
          <Stroke size={20} d="M8 .8a7.200 7.200 0 100 14.400A7.200 7.200 0 008 .8zM5.800 6.200C5.800 3.200 10.300 3.400 10.300 6c0 1.600-2.300 1.700-2.300 3.500M8 10.800v1.600" />
          <Dot />
          <Chevron />
        </IconButton>
        <IconButton aria-label="User menu" $gap={9}><IdenticonArt size={30} /><Chevron /></IconButton>
      </ActionCluster>
    </NavActions>
  </NavBar>
);

const SettingsSidebar = () => (
  <Sidebar>
    <SidebarTitle href="#settings"><IdenticonArt size={38} />User Settings</SidebarTitle>
    <SidebarList>
      {navItems.map((name) => (
        <li key={name}>
          <SidebarLink href={`#${name}`} $active={name === "SSH Keys"}>
            {sideIcons[name] ?? sideIcons.key}
            {name}
          </SidebarLink>
        </li>
      ))}
    </SidebarList>
    <CollapseButton><Stroke w={1.7} d="M8 2L2.500 8 8 14M14 2L8.500 8l5.500 6" />Collapse sidebar</CollapseButton>
  </Sidebar>
);

const Separator = () => <Stroke size={10} vb={10} w={1.5} d="M3 1.500L6.500 5 3 8.500" />;

const KeyDetails = () => (
  <Main>
    <Content>
      <Breadcrumbs>
        <Crumb><a href="#settings">User Settings</a><Separator /></Crumb>
        <Crumb><a href="#keys">SSH Keys</a><Separator /></Crumb>
        <Crumb $current><a href="#key">root@devnet</a></Crumb>
      </Breadcrumbs>
      <SearchField>
        <Magnifier />
        <SearchInput data-tone="dim" aria-label="Search settings" placeholder="Search settings" />
      </SearchField>
      <Columns>
        <Card>
          <CardTitle>SSH Key</CardTitle>
          <CardList>
            <li>Title: <strong>root@devnet</strong></li>
            <li>Created on: <strong>Dec 18, 2021 9:25am</strong></li>
            <li>Expires: <strong>Never</strong></li>
            <li>Last used on: <strong>Never</strong></li>
          </CardList>
        </Card>
        <div>
          <KeyBox>
            <KeyText>ssh-rsa AAAAB3NzaC1yc2EAAAADAQABAAABgQCjNA4bWtuS8ix9P4Lg6rd0n3qNGoyWCVOQ3ffmbhC</KeyText>
            <ScrollRow>
              <Arrow $dir="left" />
              <ScrollThumb />
              <Arrow $dir="right" $dark />
            </ScrollRow>
          </KeyBox>
          <Card>
            <CardTitle>Fingerprints</CardTitle>
            <CardList>
              <li>MD5: <Code>47:6f:cc:60:c9:54:29:38:5e:84:2b:88:19:d7:85:39</Code></li>
              <li>SHA256: <Code>DTWtOac7lrQrWL4czOBIswRuuHAkQvayPXGHkxuhjf0</Code></li>
            </CardList>
          </Card>
          <Actions><DeleteButton>Delete</DeleteButton></Actions>
        </div>
      </Columns>
    </Content>
  </Main>
);

const WindowsTaskbar = () => (
  <Taskbar>
    <SystemButton aria-label="Start"><Pic w={20} h={20}><path fill="#fff" d="M0 3l8-1v7.500H0zM9 1.800L20 0v9.500H9zM0 10.500h8V18l-8-1zM9 10.500h11V20L9 18.200z" /></Pic></SystemButton>
    <SystemButton aria-label="Cortana"><Pic w={20} h={20}><circle cx="10" cy="10" r="8.500" fill="none" stroke="#fff" strokeWidth="2.500" /></Pic></SystemButton>
    <SystemButton aria-label="Task View"><Pic w={20} h={20}><path d="M.5 0v3.500h12V0M.5 5.500h12v9H.5zM.5 20v-3.500h12V20M18.500 0v5M18.500 11v9" fill="none" stroke="#fff" /><path fill="#fff" d="M17 6h3v3.500h-3z" /></Pic></SystemButton>
    <AppGroup>
      {apps.map((a) => <AppButton key={a.name} $run={a.run} aria-label={a.name}>{a.art}</AppButton>)}
    </AppGroup>
    <Tray>
      {tray.map((t) => <TrayButton key={t.name} aria-label={t.name}>{t.art}</TrayButton>)}
      <PenButton aria-label="Pen">
        <Pic w={20} h={20}><path d="M1 16c-2-4 4-8 5-4s-1 7-4 6M6 13L14 1l3 2-8 13-4 2zM13 14c-2 2 0 4 1 1l1-5c1-2 5-3 4 0s-4 2-4 0" fill="none" stroke="#fff" strokeWidth="1.200" /></Pic>
      </PenButton>
      <Language>ENG</Language>
      <Clock>4:34 CH<br />18/12/2021</Clock>
      <Notifications aria-label="Notifications, 3 new">
        <Pic w={20} h={20}><path fill="#fff" d="M0 1h20v14H9l-4 4v-4H0z" /><path d="M4 5h12M4 8h12M4 11h8" stroke="#2a3227" strokeWidth="1.300" /></Pic>
        <NoticeCount>3</NoticeCount>
      </Notifications>
    </Tray>
  </Taskbar>
);

export default function App() {
  return (
    <Screen>
      <GlobalStyle />
      <Browser />
      <Viewport>
        <Page>
          <GitLabNav />
          <Body>
            <SettingsSidebar />
            <KeyDetails />
          </Body>
        </Page>
        <ScrollColumn aria-hidden="true"><Arrow $dir="up" /><Arrow $dir="down" /></ScrollColumn>
      </Viewport>
      <WindowsTaskbar />
    </Screen>
  );
}
